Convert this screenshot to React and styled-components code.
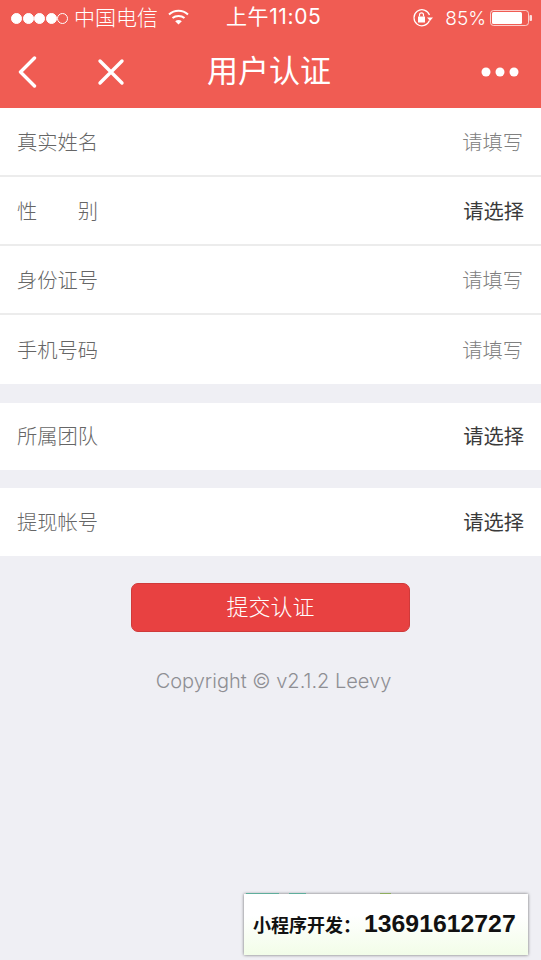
import React from 'react';
import styled, { createGlobalStyle } from 'styled-components';

const GlobalStyle = createGlobalStyle`
  html, body {
    margin: 0;
    padding: 0;
    background: #efeff4;
  }
  body {
    font-family: "Noto Sans CJK SC", "Noto Sans", sans-serif;
  }
`;

const Page = styled.div`
  position: relative;
  width: 541px;
  height: 960px;
  overflow: hidden;
  background: #efeff4;
`;

const Header = styled.header`
  background: #f05c53;
  color: white;
  height: 108px;
`;

const StatusBar = styled.div`
  height: 36px;
  display: flex;
  align-items: center;
  padding: 0 9px 0 11px;
  position: relative;
`;

const Signal = styled.div`
  display: flex;
  gap: 0.5px;
  margin-right: 6px;
`;

const Dot = styled.span`
  width: 11px;
  height: 11px;
  border-radius: 50%;
  box-sizing: border-box;
  border: 1px solid white;
  background: ${(p) => (p.$off ? 'transparent' : 'white')};
`;

const Carrier = styled.span`
  font-size: 21px;
  line-height: 28px;
  margin-bottom: 4px;
  font-weight: 300;
`;

const StatusClock = styled.span`
  position: absolute;
  left: 226px;
  top: 2px;
  font-family: "Inter", "Noto Sans CJK SC", sans-serif;
  font-size: 21px;
  letter-spacing: 0.6px;
  line-height: 30px;
`;

const StatusRight = styled.div`
  margin-left: auto;
  display: flex;
  align-items: center;
`;

const Percent = styled.span`
  font-family: "Inter", sans-serif;
  font-size: 19px;
  font-weight: 300;
  margin: 0 4px 0 11px;
`;

const NavBar = styled.div`
  height: 72px;
  display: flex;
  align-items: center;
  padding: 0 22px 2px 18px;
  position: relative;
`;

const NavTitle = styled.h1`
  position: absolute;
  left: 0;
  right: 3px;
  top: 12px;
  margin: 0;
  text-align: center;
  font-size: 31px;
  line-height: 42px;
  font-weight: 400;
`;

const CloseWrap = styled.span`
  display: flex;
  margin-left: 59px;
`;

const MoreWrap = styled.span`
  display: flex;
  margin-left: auto;
`;

const Group = styled.section`
  background: white;
  margin-bottom: ${(p) => p.$gap}px;
`;

const Row = styled.div`
  height: ${(p) => p.$height}px;
  display: flex;
  align-items: center;
  justify-content: space-between;
  padding: 0 18px ${(p) => p.$lift || 2}px 17px;
  font-size: 20.3px;
  box-sizing: border-box;
  border-bottom: ${(p) => (p.$divider ? '2px solid #ececec' : 'none')};
`;

const Label = styled.span`
  color: #666;
  font-weight: 300;
`;

const GenderLabel = styled(Label)`
  display: flex;
  justify-content: space-between;
  width: 81px;
`;

const Value = styled.span`
  color: ${(p) => (p.$placeholder ? '#808080' : '#3a3a3a')};
  font-weight: ${(p) => (p.$placeholder ? 300 : 400)};
  margin-right: ${(p) => (p.$placeholder ? 0 : -1)}px;
`;

const Actions = styled.div`
  display: flex;
  flex-direction: column;
  align-items: center;
  padding-top: 9px;
`;

const SubmitButton = styled.button`
  width: 279px;
  height: 49px;
  background: #e84141;
  color: white;
  border: 1px solid #cf3a3a;
  border-radius: 7px;
  font-family: inherit;
  font-size: 22px;
  line-height: 42px;
  font-weight: 300;
  padding: 0 0 5px;
`;

const Copyright = styled.p`
  margin: 33px 0 0 6px;
  font-family: "Inter", sans-serif;
  font-weight: 300;
  font-size: 20px;
  line-height: 32px;
  color: #8e8e93;
`;

const Promo = styled.div`
  position: absolute;
  left: 244px;
  top: 894px;
  width: 284px;
  height: 61px;
  display: flex;
  align-items: center;
  padding: 0 0 2px 9px;
  box-sizing: border-box;
  background: linear-gradient(#ffffff 35%, #f2fde8);
  box-shadow: 0 0 3px rgba(0, 0, 0, 0.55);
  color: #111;
  font-family: "Liberation Sans", "Noto Sans CJK SC", sans-serif;
  font-weight: 700;
`;

const PromoLabel = styled.span`
  font-size: 18px;
  font-family: "Noto Sans CJK SC", sans-serif;
  white-space: nowrap;
`;

const PromoPhone = styled.span`
  font-size: 24.8px;
  margin-left: 3px;
`;

const PromoEdge = styled.i`
  position: absolute;
  top: -1px;
  left: ${(p) => p.$left}px;
  width: ${(p) => p.$width}px;
  height: 1px;
  background: ${(p) => p.$color};
`;

function BackIcon() {
  return (
    <svg width="20" height="32" viewBox="0 0 20 32" fill="none" stroke="white" strokeWidth="3.4" strokeLinecap="round" strokeLinejoin="round">
      <path d="M16.5 2 L2.5 16 L16.5 30" />
    </svg>
  );
}

function CloseIcon() {
  return (
    <svg width="28" height="28" viewBox="0 0 28 28" fill="none" stroke="white" strokeWidth="3.4" strokeLinecap="round">
      <path d="M3 3 L25 25 M25 3 L3 25" />
    </svg>
  );
}

function MoreIcon() {
  return (
    <svg width="38" height="12" viewBox="0 0 38 12" fill="white">
      <circle cx="5" cy="6" r="4.5" />
      <circle cx="19" cy="6" r="4.5" />
      <circle cx="33" cy="6" r="4.5" />
    </svg>
  );
}

const WifiSvg = styled.svg`
  margin: 0 0 2px 10px;
`;

function WifiIcon() {
  return (
    <WifiSvg width="21" height="16" viewBox="0 0 21 16" fill="none" stroke="white" strokeWidth="2">
      <path d="M1 5.5 C6.5 0.5 14.5 0.5 20 5.5" />
      <path d="M4.5 9 C7.8 6.2 13.2 6.2 16.5 9" />
      <path d="M10.5 15.5 L7.2 12.2 C9 10.6 12 10.6 13.8 12.2 Z" fill="white" stroke="none" />
    </WifiSvg>
  );
}

function LockIcon() {
  return (
    <svg width="22" height="20" viewBox="0 0 22 20" fill="none" stroke="white" strokeWidth="1.2">
      <path d="M17.5 12.5 A8 8 0 1 1 17.5 7" />
      <path d="M15 9.5 H21 L18 13 Z" fill="white" stroke="none" />
      <rect x="6" y="8.5" width="7" height="6" fill="white" stroke="none" />
      <path d="M7.5 8.5 V6.8 A2 2 0 0 1 11.5 6.8 V8.5" />
    </svg>
  );
}

function BatteryIcon() {
  return (
    <svg width="42" height="16" viewBox="0 0 42 16">
      <rect x="0.5" y="0.5" width="38" height="15" rx="3" fill="none" stroke="white" strokeOpacity="0.7" />
      <rect x="2" y="2" width="30" height="12" rx="1.5" fill="white" />
      <rect x="39.5" y="5" width="2.5" height="6" rx="1" fill="white" fillOpacity="0.8" />
    </svg>
  );
}

export default function App() {
  return (
    <Page>
      <GlobalStyle />
      <Header>
        <StatusBar>
          <Signal>
            <Dot />
            <Dot />
            <Dot />
            <Dot />
            <Dot $off />
          </Signal>
          <Carrier>中国电信</Carrier>
          <WifiIcon />
          <StatusClock>上午11:05</StatusClock>
          <StatusRight>
            <LockIcon />
            <Percent>85%</Percent>
            <BatteryIcon />
          </StatusRight>
        </StatusBar>
        <NavBar>
          <BackIcon />
          <CloseWrap>
            <CloseIcon />
          </CloseWrap>
          <NavTitle>用户认证</NavTitle>
          <MoreWrap>
            <MoreIcon />
          </MoreWrap>
        </NavBar>
      </Header>
      <Group $gap={19}>
        <Row $height={69} $divider>
          <Label>真实姓名</Label>
          <Value $placeholder>请填写</Value>
        </Row>
        <Row $height={69} $divider>
          <GenderLabel>
            <span>性</span>
            <span>别</span>
          </GenderLabel>
          <Value>请选择</Value>
        </Row>
        <Row $height={69} $divider>
          <Label>身份证号</Label>
          <Value $placeholder>请填写</Value>
        </Row>
        <Row $height={69}>
          <Label>手机号码</Label>
          <Value $placeholder>请填写</Value>
        </Row>
      </Group>
      <Group $gap={18}>
        <Row $height={67} $lift={4}>
          <Label>所属团队</Label>
          <Value>请选择</Value>
        </Row>
      </Group>
      <Group $gap={18}>
        <Row $height={68}>
          <Label>提现帐号</Label>
          <Value>请选择</Value>
        </Row>
      </Group>
      <Actions>
        <SubmitButton>提交认证</SubmitButton>
        <Copyright>Copyright © v2.1.2 Leevy</Copyright>
      </Actions>
      <Promo>
        <PromoEdge $left={2} $width={33} $color="#5fae9c" />
        <PromoEdge $left={45} $width={17} $color="#5fae9c" />
        <PromoEdge $left={136} $width={11} $color="#8fae5f" />
        <PromoLabel>小程序开发：</PromoLabel>
        <PromoPhone>13691612727</PromoPhone>
      </Promo>
    </Page>
  );
}
